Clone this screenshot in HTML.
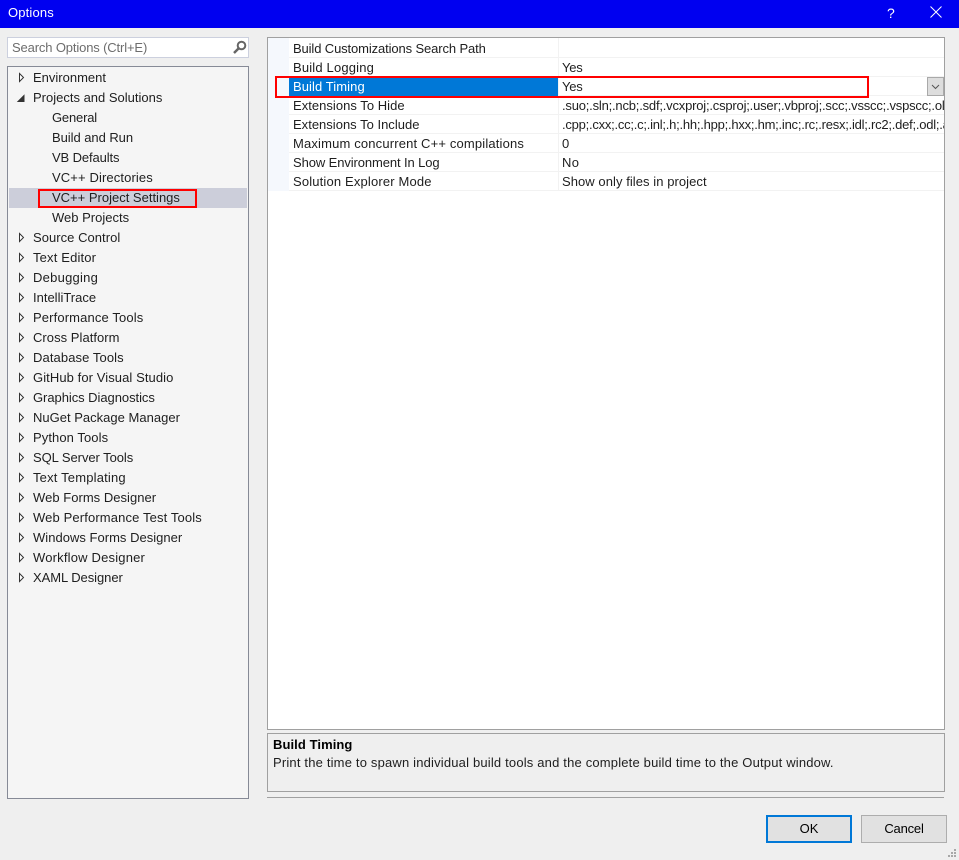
<!DOCTYPE html>
<html><head><meta charset="utf-8"><style>
html,body{margin:0;padding:0;width:959px;height:860px;overflow:hidden;background:#efefef}
body{font:13px/20px "Liberation Sans",sans-serif;color:#1e1e1e;position:relative}
div,span,svg{position:absolute;box-sizing:border-box}
span{white-space:nowrap}
.l{left:0;width:678px;height:1px;background:#f2f2f2}
</style></head><body>
<div style="left:0;top:0;width:959px;height:28px;background:#0000f0"></div>
<span style="left:8px;top:3px;color:#fff;letter-spacing:.15px">Options</span>
<span style="left:887px;top:3px;color:#fff;font-size:14px">?</span>
<svg style="left:930px;top:6px" width="12" height="12" viewBox="0 0 12 12"><path d="M.5.5l11 11M11.500.5l-11 11" stroke="#fff" fill="none"/></svg>

<div style="left:7px;top:37px;width:242px;height:21px;background:#fff;border:1px solid #ccd0de"></div>
<span style="left:12px;top:38px;color:#6d6d6d;letter-spacing:-.14px">Search Options (Ctrl+E)</span>
<svg style="left:232px;top:40px" width="15" height="15" viewBox="0 0 15 15"><circle cx="9.500" cy="5.500" r="3.800" fill="none" stroke="#666" stroke-width="2"/><path d="M6.500 8.500L2 13" stroke="#666" stroke-width="2.500"/></svg>

<div style="left:7px;top:66px;width:242px;height:733px;background:#f5f5f5;border:1px solid #868a96"></div>
<div style="left:9px;top:188px;width:238px;height:20px;background:#ccceda"></div>
<div style="left:38px;top:189px;width:159px;height:19px;border:2px solid #f00"></div>
<div id="tree" style="left:0;top:0">
<span style="left:33px;top:68px">Environment</span>
<span style="left:33px;top:88px">Projects and Solutions</span>
<span style="left:52px;top:108px;letter-spacing:-.18px">General</span>
<span style="left:52px;top:128px;letter-spacing:-.05px">Build and Run</span>
<span style="left:52px;top:148px;letter-spacing:-.11px">VB Defaults</span>
<span style="left:52px;top:168px;letter-spacing:.12px">VC++ Directories</span>
<span style="left:52px;top:188px">VC++ Project Settings</span>
<span style="left:52px;top:208px">Web Projects</span>
<span style="left:33px;top:228px;letter-spacing:.04px">Source Control</span>
<span style="left:33px;top:248px;letter-spacing:.16px">Text Editor</span>
<span style="left:33px;top:268px;letter-spacing:.25px">Debugging</span>
<span style="left:33px;top:288px">IntelliTrace</span>
<span style="left:33px;top:308px;letter-spacing:.13px">Performance Tools</span>
<span style="left:33px;top:328px;letter-spacing:.04px">Cross Platform</span>
<span style="left:33px;top:348px;letter-spacing:.1px">Database Tools</span>
<span style="left:33px;top:368px;letter-spacing:.08px">GitHub for Visual Studio</span>
<span style="left:33px;top:388px;letter-spacing:-.05px">Graphics Diagnostics</span>
<span style="left:33px;top:408px;letter-spacing:.01px">NuGet Package Manager</span>
<span style="left:33px;top:428px;letter-spacing:.08px">Python Tools</span>
<span style="left:33px;top:448px;letter-spacing:-.06px">SQL Server Tools</span>
<span style="left:33px;top:468px;letter-spacing:.18px">Text Templating</span>
<span style="left:33px;top:488px;letter-spacing:.03px">Web Forms Designer</span>
<span style="left:33px;top:508px;letter-spacing:.13px">Web Performance Test Tools</span>
<span style="left:33px;top:528px;letter-spacing:.02px">Windows Forms Designer</span>
<span style="left:33px;top:548px;letter-spacing:.19px">Workflow Designer</span>
<span style="left:33px;top:568px;letter-spacing:-.06px">XAML Designer</span>
</div>
<svg style="left:0;top:0" width="40" height="600" fill="#fff" stroke="#333">
<path d="M19.500 73.500v8l4-4z"/>
<path d="M18 101.500h6v-6z" fill="#333"/>
<path d="M19.500 233.500v8l4-4zM19.500 253.500v8l4-4zM19.500 273.500v8l4-4zM19.500 293.500v8l4-4zM19.500 313.500v8l4-4zM19.500 333.500v8l4-4zM19.500 353.500v8l4-4zM19.500 373.500v8l4-4zM19.500 393.500v8l4-4zM19.500 413.500v8l4-4zM19.500 433.500v8l4-4zM19.500 453.500v8l4-4zM19.500 473.500v8l4-4zM19.500 493.500v8l4-4zM19.500 513.500v8l4-4zM19.500 533.500v8l4-4zM19.500 553.500v8l4-4zM19.500 573.500v8l4-4z"/>
</svg>

<div style="left:267px;top:37px;width:678px;height:693px;background:#fff;border:1px solid #a0a0a0;overflow:hidden"></div>
<div style="left:268px;top:38px;width:21px;height:153px;background:#f5f8fd"></div>
<div style="left:268px;top:38px;width:676px;height:160px;overflow:hidden">
<div class="l" style="top:19px;left:21px"></div><div class="l" style="top:38px;left:21px"></div><div class="l" style="top:57px;left:21px"></div><div class="l" style="top:76px;left:21px"></div><div class="l" style="top:95px;left:21px"></div><div class="l" style="top:114px;left:21px"></div><div class="l" style="top:133px;left:21px"></div><div class="l" style="top:152px;left:21px"></div>
<div style="left:290px;top:0;width:1px;height:153px;background:#f2f2f2"></div>
</div>
<div style="left:289px;top:77px;width:269px;height:19px;background:#0078d7"></div>
<span style="left:293px;top:39px;letter-spacing:-.12px">Build Customizations Search Path</span>
<span style="left:293px;top:58px;letter-spacing:.17px">Build Logging</span>
<span style="left:293px;top:77px;color:#fff;letter-spacing:.08px">Build Timing</span>
<span style="left:293px;top:96px;letter-spacing:.03px">Extensions To Hide</span>
<span style="left:293px;top:115px;letter-spacing:.01px">Extensions To Include</span>
<span style="left:293px;top:134px;letter-spacing:.16px">Maximum concurrent C++ compilations</span>
<span style="left:293px;top:153px;letter-spacing:-.1px">Show Environment In Log</span>
<span style="left:293px;top:172px;letter-spacing:.16px">Solution Explorer Mode</span>
<span style="left:562px;top:58px;letter-spacing:-.2px">Yes</span>
<span style="left:562px;top:77px;letter-spacing:-.2px">Yes</span>
<div style="left:559px;top:96px;width:385px;height:40px;overflow:hidden">
<span style="left:3px;top:0;letter-spacing:-.2px">.suo;.sln;.ncb;.sdf;.vcxproj;.csproj;.user;.vbproj;.scc;.vsscc;.vspscc;.old;.filters</span>
<span style="left:3px;top:19px;letter-spacing:-.24px">.cpp;.cxx;.cc;.c;.inl;.h;.hh;.hpp;.hxx;.hm;.inc;.rc;.resx;.idl;.rc2;.def;.odl;.asm</span>
</div>
<span style="left:562px;top:134px">0</span>
<span style="left:562px;top:153px;letter-spacing:.4px">No</span>
<span style="left:562px;top:172px;letter-spacing:.06px">Show only files in project</span>
<div style="left:275px;top:76px;width:594px;height:22px;border:2px solid #f00"></div>
<div style="left:927px;top:77px;width:17px;height:19px;background:#ddd;border:1px solid #a9a9a9"></div>
<svg style="left:931px;top:84px" width="10" height="7"><path d="M1 1l3.500 3.500L8 1" fill="none" stroke="#555"/></svg>

<div style="left:267px;top:733px;width:678px;height:59px;background:#efefef;border:1px solid #a0a0a0"></div>
<span style="left:273px;top:735px;font-weight:bold;color:#000;letter-spacing:.08px">Build Timing</span>
<span style="left:273px;top:753px;letter-spacing:.18px">Print the time to spawn individual build tools and the complete build time to the Output window.</span>
<div style="left:267px;top:797px;width:677px;height:1px;background:#a0a0a0"></div>
<div style="left:766px;top:815px;width:86px;height:28px;background:#e1e1e1;border:2px solid #0078d7;text-align:center;line-height:24px;color:#000">OK</div>
<div style="left:861px;top:815px;width:86px;height:28px;background:#e1e1e1;border:1px solid #adadad;text-align:center;line-height:26px;color:#000;letter-spacing:-.2px">Cancel</div>
<svg style="left:947px;top:849px" width="11" height="10" fill="#a8a8a8"><rect x="7" y="0" width="2" height="2"/><rect x="4" y="3" width="2" height="2"/><rect x="7" y="3" width="2" height="2"/><rect x="1" y="6" width="2" height="2"/><rect x="4" y="6" width="2" height="2"/><rect x="7" y="6" width="2" height="2"/></svg>
</body></html>
